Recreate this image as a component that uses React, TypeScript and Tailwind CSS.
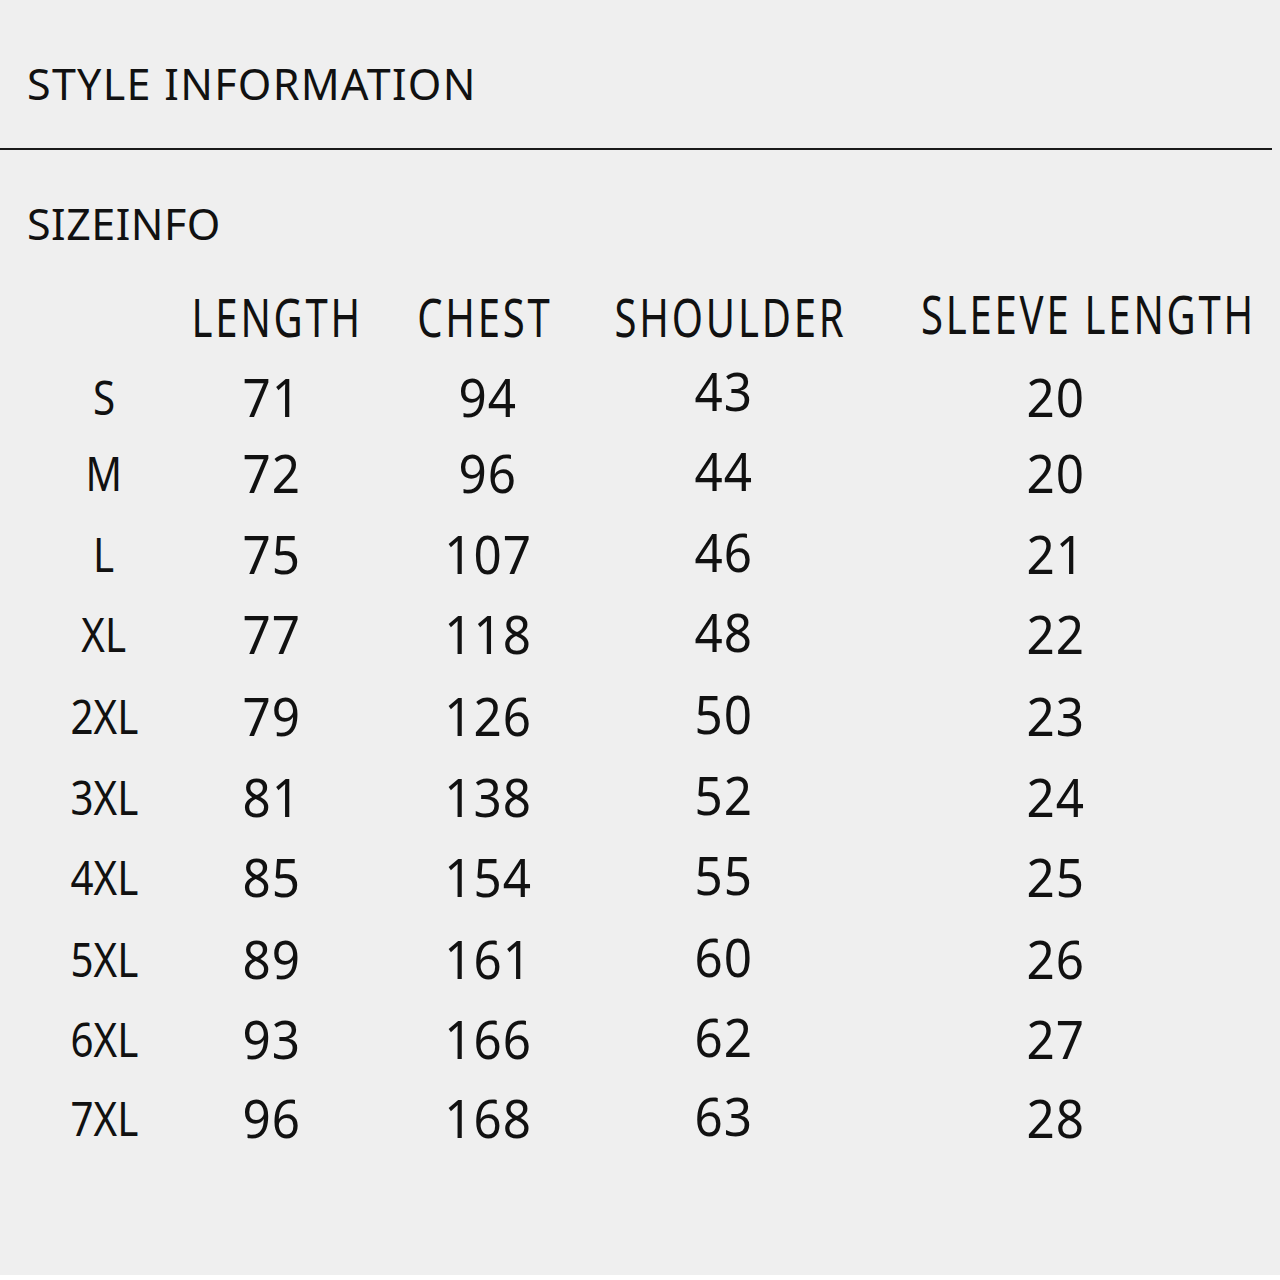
import React from "react";

type Row = { size: string; vals: [string, string, string, string]; shift: string };

const rows: Row[] = [
  { size: "S", vals: ["71", "94", "43", "20"], shift: "" },
  { size: "M", vals: ["72", "96", "44", "20"], shift: "-mt-[4px]" },
  { size: "L", vals: ["75", "107", "46", "21"], shift: "mt-[1px]" },
  { size: "XL", vals: ["77", "118", "48", "22"], shift: "" },
  { size: "2XL", vals: ["79", "126", "50", "23"], shift: "mt-[2px]" },
  { size: "3XL", vals: ["81", "138", "52", "24"], shift: "mt-[1px]" },
  { size: "4XL", vals: ["85", "154", "55", "25"], shift: "" },
  { size: "5XL", vals: ["89", "161", "60", "26"], shift: "mt-[2px]" },
  { size: "6XL", vals: ["93", "166", "62", "27"], shift: "" },
  { size: "7XL", vals: ["96", "168", "63", "28"], shift: "-mt-[1px]" },
];

export default function App() {
  return (
    <div
      className="w-[1280px] h-[1280px] bg-[#efefef] overflow-hidden flex flex-col text-[#111111]"
      style={{ fontFamily: '"Noto Sans", "Open Sans", sans-serif' }}
    >
      <div className="mt-[62px] pl-[27px] h-[43px] text-[43px] leading-[43px] tracking-[1.3px] whitespace-nowrap">
        STYLE INFORMATION
      </div>
      <div className="mt-[43px] h-[2px] w-[1272px] bg-[#1a1a1a]" />
      <div className="mt-[52px] pl-[27px] h-[43px] text-[43px] leading-[43px] tracking-[0.5px] whitespace-nowrap">
        SIZEINFO
      </div>

      <div className="mt-[32px] flex flex-col">
        <div className="flex h-[80px] items-center pl-[40px] text-[52px] leading-[80px] whitespace-nowrap">
          <div className="w-[128px] shrink-0" />
          <div className="w-[218px] shrink-0 flex justify-center">
            <span className="inline-block scale-x-[0.77] tracking-[3.6px]">LENGTH</span>
          </div>
          <div className="w-[198px] shrink-0 flex justify-center">
            <span className="inline-block scale-x-[0.77] tracking-[3.6px]">CHEST</span>
          </div>
          <div className="w-[292px] shrink-0 flex justify-center">
            <span className="inline-block scale-x-[0.77] tracking-[3.6px]">SHOULDER</span>
          </div>
          <div className="w-[426px] shrink-0 flex justify-center -mt-[6px]">
            <span className="inline-block scale-x-[0.77] tracking-[3.6px]">SLEEVE LENGTH</span>
          </div>
        </div>

        {rows.map((r, i) => (
          <div
            key={r.size}
            className={`flex h-[80px] items-center pl-[40px] text-[52px] leading-[80px] whitespace-nowrap ${r.shift}`}
          >
            <div className="w-[128px] shrink-0 flex justify-center text-[48px]">
              <span className="inline-block scale-x-[0.84]">{r.size}</span>
            </div>
            <div className="w-[208px] shrink-0 flex justify-center">
              <span className="inline-block scale-x-[0.95] tracking-[1px]">{r.vals[0]}</span>
            </div>
            <div className="w-[224px] shrink-0 flex justify-center">
              <span className="inline-block scale-x-[0.95] tracking-[1px]">{r.vals[1]}</span>
            </div>
            <div className="w-[248px] shrink-0 flex justify-center">
              <span
                className={`inline-block scale-x-[0.95] tracking-[1px] ${
                  i === 0 ? "-translate-y-[6px]" : i === 1 ? "-translate-y-[2px]" : "-translate-y-[2px]"
                }`}
              >
                {r.vals[2]}
              </span>
            </div>
            <div className="w-[416px] shrink-0 flex justify-center">
              <span className="inline-block scale-x-[0.95] tracking-[1px]">{r.vals[3]}</span>
            </div>
          </div>
        ))}
      </div>

      <div className="flex-1" />
      <div className="h-[5px] bg-white" />
    </div>
  );
}
